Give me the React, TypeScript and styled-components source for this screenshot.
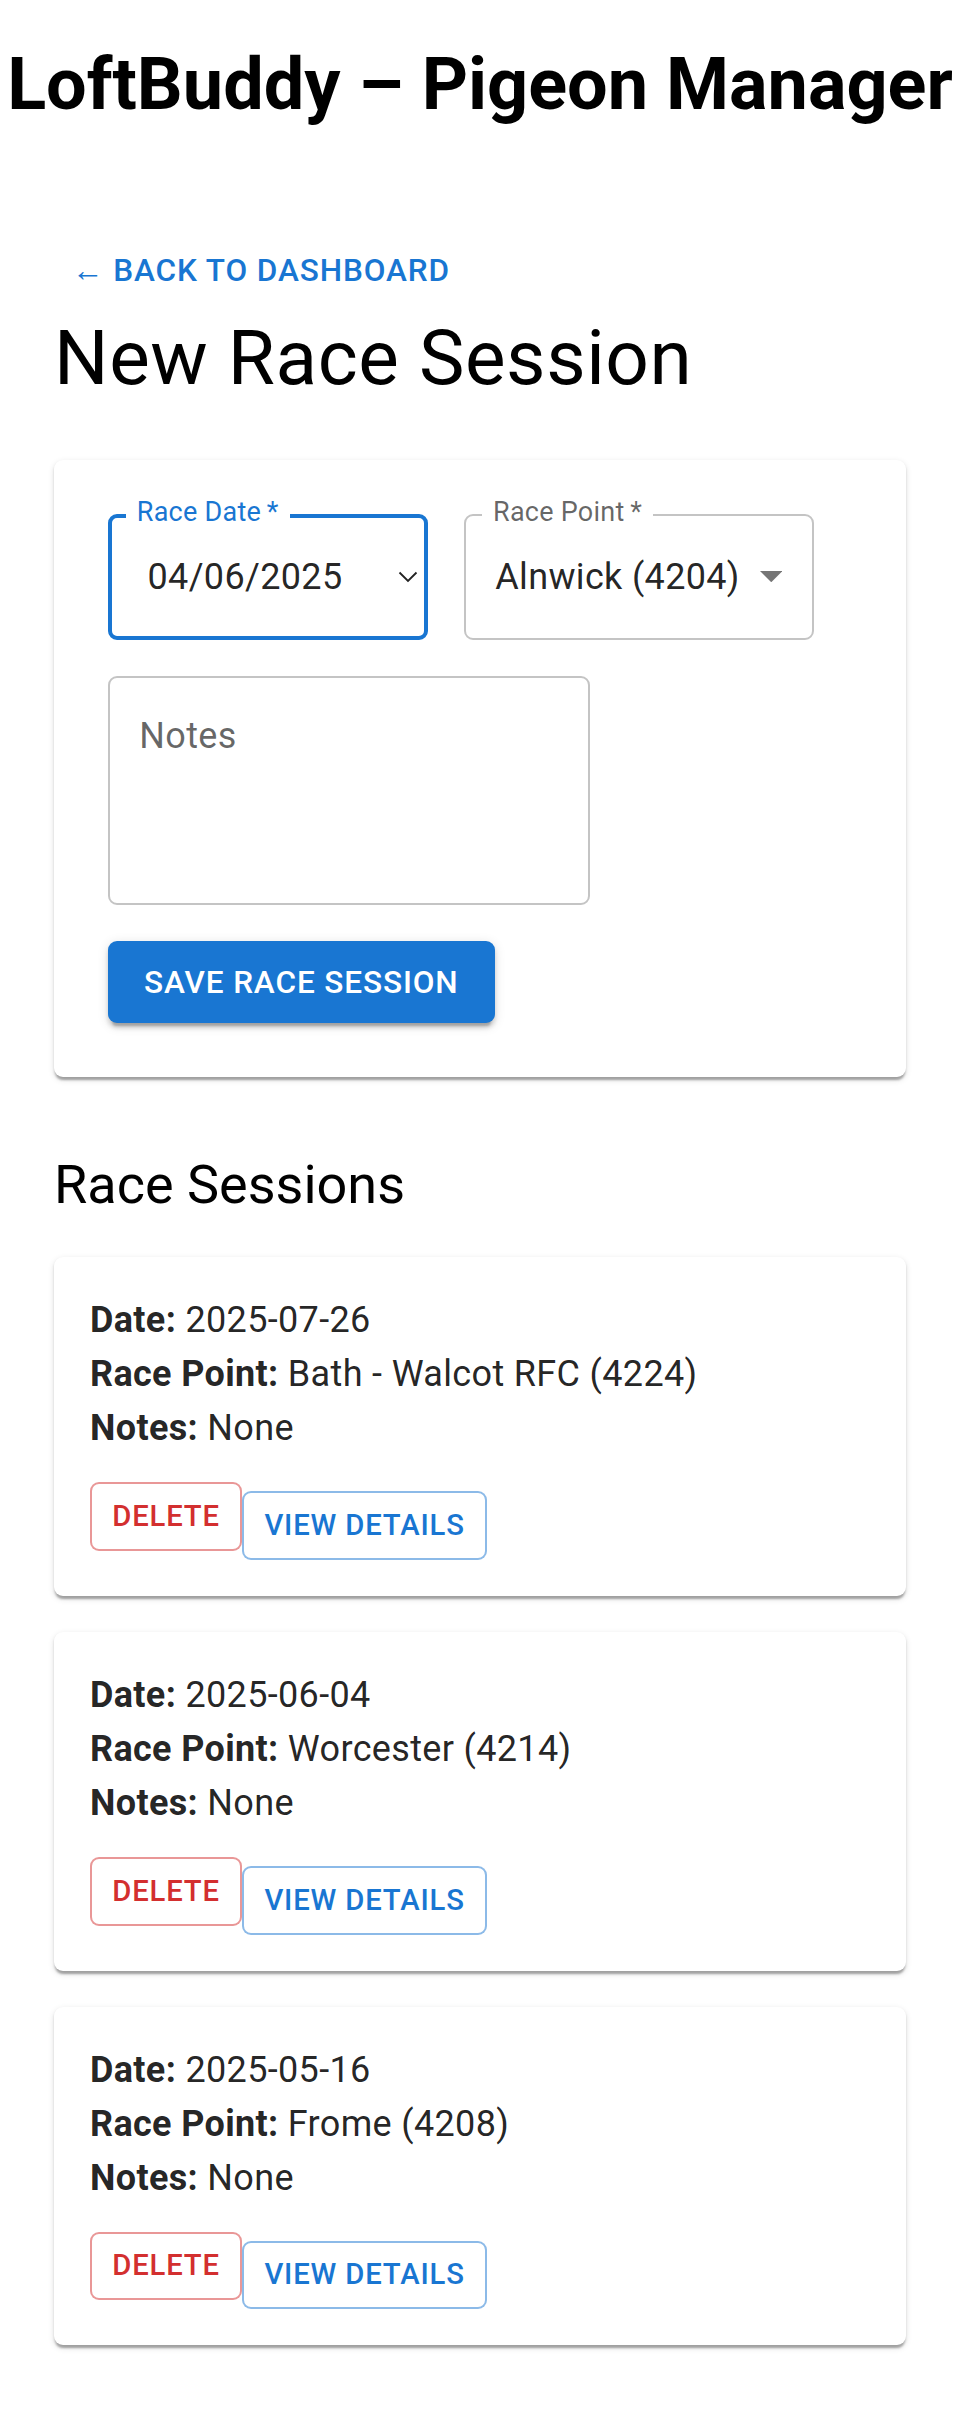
import styled, { createGlobalStyle, css } from "styled-components";

// The reference is a MUI page photographed at ~2.25x, so every size here is css px * 2.25.

const GlobalStyle = createGlobalStyle`
  body {
    margin: 0;
    background: #ffffff;
    font-family: Roboto, "Helvetica Neue", Arial, sans-serif;
    color: rgba(0, 0, 0, 0.87);
  }
  * {
    box-sizing: border-box;
  }
`;

const paperShadow = css`
  box-shadow: 0 4.5px 2.25px -2.25px rgba(0, 0, 0, 0.2),
    0 2.25px 2.25px 0 rgba(0, 0, 0, 0.14),
    0 2.25px 6.75px 0 rgba(0, 0, 0, 0.12);
`;

const Header = styled.header`
  display: flex;
  justify-content: center;
`;

const AppTitle = styled.h1`
  margin: 43px 0 48px;
  font-size: 72px;
  font-weight: 700;
  line-height: 84px;
  white-space: nowrap;
  color: #000;
`;

const Main = styled.main`
  margin-top: 54px;
  padding: 0 54px 60px;
`;

const BackButton = styled.button`
  display: inline-flex;
  align-items: center;
  padding: 13.5px 18px;
  border: 0;
  border-radius: 9px;
  background: none;
  color: #1976d2;
  font-family: inherit;
  font-size: 31.5px;
  font-weight: 500;
  line-height: 1.75;
  letter-spacing: 0.9px;
  text-transform: uppercase;
  cursor: pointer;
`;

const PageTitle = styled.h4`
  margin: 0 0 54px;
  font-size: 76.5px;
  font-weight: 400;
  line-height: 1.235;
  letter-spacing: 0.56px;
  color: #000;
`;

const FormCard = styled.section`
  padding: 54px;
  border-radius: 9px;
  background: #fff;
  ${paperShadow}
`;

const Form = styled.form`
  display: flex;
  flex-wrap: wrap;
  align-items: flex-start;
  gap: 36px;
`;

const Outlined = styled.div<{ $focused?: boolean; $width?: number }>`
  position: relative;
  display: inline-flex;
  align-items: center;
  height: 126px;
  ${({ $width }) => ($width ? `width: ${$width}px;` : "")}
  border-radius: 9px;
  border: ${({ $focused }) =>
    $focused ? "4.5px solid #1976d2" : "2.25px solid rgba(0, 0, 0, 0.23)"};
  padding-left: ${({ $focused }) => ($focused ? "35.5px" : "29.25px")};
  font-size: 36px;
  letter-spacing: 0.34px;
  color: rgba(0, 0, 0, 0.87);
`;

const FloatLabel = styled.span<{ $focused?: boolean }>`
  position: absolute;
  top: ${({ $focused }) => ($focused ? "-19px" : "-16.75px")};
  left: ${({ $focused }) => ($focused ? "13.5px" : "15.75px")};
  padding: 0 11.25px;
  background: #fff;
  font-size: 27px;
  line-height: 27px;
  letter-spacing: 0.25px;
  color: ${({ $focused }) => ($focused ? "#1976d2" : "rgba(0, 0, 0, 0.6)")};
  white-space: nowrap;
`;

const DateValue = styled.span`
  flex: 1;
`;

const DateChevron = styled.svg`
  width: 20px;
  height: 12px;
  margin-right: 6px;
`;

const SelectArrow = styled.svg`
  width: 22.5px;
  height: 11.25px;
  margin: 0 29.25px 0 20px;
`;

const NotesBox = styled.div`
  width: 482px;
  height: 229.5px;
  padding: 33.75px 29.25px;
  border: 2.25px solid rgba(0, 0, 0, 0.23);
  border-radius: 9px;
  font-size: 36px;
  line-height: 51.75px;
  letter-spacing: 0.34px;
  color: rgba(0, 0, 0, 0.6);
`;

const ButtonRow = styled.div`
  flex-basis: 100%;
`;

const SaveButton = styled.button`
  padding: 13.5px 36px;
  border: 0;
  border-radius: 9px;
  background: #1976d2;
  color: #fff;
  font-family: inherit;
  font-size: 31.5px;
  font-weight: 500;
  line-height: 1.75;
  letter-spacing: 0.9px;
  text-transform: uppercase;
  cursor: pointer;
  box-shadow: 0 6.75px 2.25px -4.5px rgba(0, 0, 0, 0.2),
    0 4.5px 4.5px 0 rgba(0, 0, 0, 0.14),
    0 2.25px 11.25px 0 rgba(0, 0, 0, 0.12);
`;

const SectionTitle = styled.h5`
  margin: 72px 0 36px;
  font-size: 54px;
  font-weight: 400;
  line-height: 1.334;
  color: #000;
`;

const SessionCard = styled.article`
  margin-bottom: 36px;
  padding: 36px;
  border-radius: 9px;
  background: #fff;
  ${paperShadow}
`;

const Line = styled.p`
  margin: 0;
  font-size: 36px;
  line-height: 54px;
  letter-spacing: 0.34px;
  color: rgba(0, 0, 0, 0.87);

  strong {
    font-weight: 700;
  }
`;

const Actions = styled.div`
  display: flex;
  align-items: flex-start;
  margin-top: 27px;
`;

const tones = {
  red: { text: "#d32f2f", border: "rgba(211, 47, 47, 0.5)" },
  blue: { text: "#1976d2", border: "rgba(25, 118, 210, 0.5)" },
};

const SmallOutlined = styled.button<{ $tone: keyof typeof tones; $drop?: boolean }>`
  margin-top: ${({ $drop }) => ($drop ? "9px" : "0")};
  padding: 6.75px 20.25px;
  border: 2.25px solid ${({ $tone }) => tones[$tone].border};
  border-radius: 9px;
  background: #fff;
  color: ${({ $tone }) => tones[$tone].text};
  font-family: inherit;
  font-size: 29.25px;
  font-weight: 500;
  line-height: 1.75;
  letter-spacing: 0.84px;
  text-transform: uppercase;
  cursor: pointer;
`;

const sessions = [
  { date: "2025-07-26", point: "Bath - Walcot RFC (4224)", notes: "None" },
  { date: "2025-06-04", point: "Worcester (4214)", notes: "None" },
  { date: "2025-05-16", point: "Frome (4208)", notes: "None" },
];

export default function App() {
  return (
    <>
      <GlobalStyle />
      <Header>
        <AppTitle>LoftBuddy – Pigeon Manager</AppTitle>
      </Header>
      <Main>
        <BackButton type="button">← Back to Dashboard</BackButton>
        <PageTitle>New Race Session</PageTitle>

        <FormCard>
          <Form onSubmit={(e) => e.preventDefault()}>
            <Outlined $focused $width={320}>
              <FloatLabel $focused>Race Date&thinsp;*</FloatLabel>
              <DateValue>04/06/2025</DateValue>
              <DateChevron viewBox="0 0 20 12">
                <polyline points="1.5,1.5 10,10 18.5,1.5" fill="none" stroke="#222" strokeWidth="1.8" />
              </DateChevron>
            </Outlined>

            <Outlined>
              <FloatLabel>Race Point&thinsp;*</FloatLabel>
              <span>Alnwick (4204)</span>
              <SelectArrow viewBox="7 10 10 5">
                <path d="M7 10l5 5 5-5z" fill="rgba(0,0,0,0.54)" />
              </SelectArrow>
            </Outlined>

            <NotesBox>Notes</NotesBox>

            <ButtonRow>
              <SaveButton type="submit">Save Race Session</SaveButton>
            </ButtonRow>
          </Form>
        </FormCard>

        <SectionTitle>Race Sessions</SectionTitle>

        {sessions.map((s) => (
          <SessionCard key={s.date}>
            <Line>
              <strong>Date:</strong> {s.date}
            </Line>
            <Line>
              <strong>Race Point:</strong> {s.point}
            </Line>
            <Line>
              <strong>Notes:</strong> {s.notes}
            </Line>
            <Actions>
              <SmallOutlined $tone="red">Delete</SmallOutlined>
              <SmallOutlined $tone="blue" $drop>
                View Details
              </SmallOutlined>
            </Actions>
          </SessionCard>
        ))}
      </Main>
    </>
  );
}
